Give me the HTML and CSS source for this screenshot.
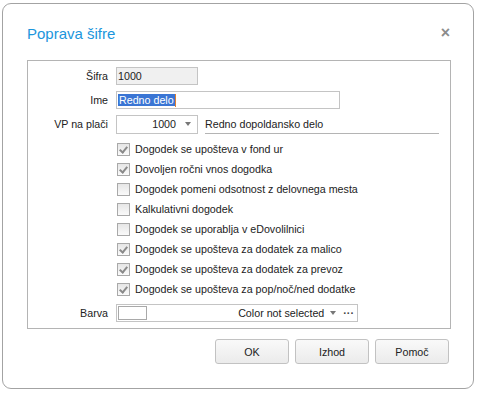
FILE: index.html
```html
<!DOCTYPE html>
<html>
<head>
<meta charset="utf-8">
<link rel="stylesheet" href="styles.css">
</head>
<body>
<div class="dialog">
  <div class="header">
    <span class="title">Poprava šifre</span>
    <span class="close">×</span>
  </div>
  <div class="panel">
    <div class="row">
      <label class="lbl">Šifra</label>
      <div class="field readonly short">1000</div>
    </div>
    <div class="row">
      <label class="lbl">Ime</label>
      <div class="field long"><span class="sel">Redno delo</span><span class="caret"></span></div>
    </div>
    <div class="row">
      <label class="lbl">VP na plači</label>
      <div class="combo short"><span class="num">1000</span><span class="arrow"></span></div>
      <div class="desc">Redno dopoldansko delo</div>
    </div>
    <div class="checks">
      <div class="chk"><span class="box on"></span>Dogodek se upošteva v fond ur</div>
      <div class="chk"><span class="box on"></span>Dovoljen ročni vnos dogodka</div>
      <div class="chk"><span class="box"></span>Dogodek pomeni odsotnost z delovnega mesta</div>
      <div class="chk"><span class="box"></span>Kalkulativni dogodek</div>
      <div class="chk"><span class="box"></span>Dogodek se uporablja v eDovolilnici</div>
      <div class="chk"><span class="box on"></span>Dogodek se upošteva za dodatek za malico</div>
      <div class="chk"><span class="box on"></span>Dogodek se upošteva za dodatek za prevoz</div>
      <div class="chk"><span class="box on"></span>Dogodek se upošteva za pop/noč/ned dodatke</div>
    </div>
    <div class="row barva">
      <label class="lbl">Barva</label>
      <div class="color">
        <span class="swatch"></span>
        <span class="ctext">Color not selected</span>
        <span class="arrow"></span>
        <span class="dots">···</span>
      </div>
    </div>
  </div>
  <div class="buttons">
    <button class="btn">OK</button>
    <button class="btn">Izhod</button>
    <button class="btn">Pomoč</button>
  </div>
</div>
</body>
</html>
```

FILE: styles.css
```css
* { box-sizing: border-box; }
html, body { margin: 0; padding: 0; background: #fff; }
body {
  font-family: "Liberation Sans", Arial, sans-serif;
  font-size: 10.7px;
  color: #222;
}
.dialog {
  margin: 3px 0 0 2px;
  width: 472px;
  height: 386px;
  border: 1px solid #a3a3a3;
  border-radius: 9px;
  padding: 0 24px;
}
.header {
  display: flex;
  justify-content: space-between;
  align-items: center;
  height: 56px;
  padding-top: 2px;
}
.title {
  color: #1b96dc;
  font-size: 15px;
}
.close {
  color: #8c8c8c;
  font-size: 16px;
  font-weight: bold;
  margin-right: -1px;
}
.panel {
  border: 1px solid #b4b4b4;
  width: 424px;
  height: 269px;
  padding-top: 6px;
}
.row {
  display: flex;
  align-items: center;
  height: 18px;
  margin-bottom: 6px;
}
.lbl {
  width: 80px;
  text-align: right;
  margin-right: 8px;
}
.field {
  height: 18px;
  border: 1px solid #c4c4c4;
  padding: 0 1px;
  display: flex;
  align-items: center;
}
.readonly { background: #f0f0f0; }
.short { width: 82px; }
.long { width: 224px; }
.sel { background: #3a75d4; color: #fff; padding: 0 1px; }
.caret { width: 1px; height: 13px; background: #e08030; }
.combo {
  height: 19px;
  border: 1px solid #c4c4c4;
  display: flex;
  align-items: center;
  justify-content: flex-end;
  padding-right: 6px;
}
.combo .num { margin-right: 9px; }
.arrow {
  width: 0; height: 0;
  border-left: 3.5px solid transparent;
  border-right: 3.5px solid transparent;
  border-top: 4px solid #777;
}
.desc {
  margin-left: 7px;
  width: 234px;
  border-bottom: 1px solid #b4b4b4;
  padding-top: 1px;
  height: 19px;
  line-height: 17px;
}
.checks {
  margin-left: 88px;
  margin-top: 5px;
}
.chk {
  display: flex;
  align-items: center;
  height: 20px;
}
.box {
  width: 13px;
  height: 13px;
  border: 1px solid #a9a9a9;
  background: linear-gradient(#e6e6e6, #fafafa);
  margin-left: 1px;
  margin-right: 5px;
  position: relative;
}
.box.on::after {
  content: "";
  position: absolute;
  left: 3px;
  top: 1px;
  width: 3px;
  height: 6px;
  border-right: 2px solid #8a8a8a;
  border-bottom: 2px solid #8a8a8a;
  transform: rotate(40deg);
}
.barva { margin-top: 5px; }
.color {
  width: 242px;
  height: 18px;
  border: 1px solid #c4c4c4;
  display: flex;
  align-items: center;
  padding: 0 3px 0 1px;
}
.swatch {
  width: 29px;
  height: 14px;
  border: 1px solid #a9a9a9;
}
.ctext { margin-left: auto; margin-right: 6px; }
.dots { margin-left: 7px; font-weight: bold; color: #444; }
.buttons {
  display: flex;
  justify-content: flex-end;
  gap: 6px;
  margin-top: 10px;
  margin-right: 0;
}
.btn {
  width: 74px;
  height: 25px;
  border: 1px solid #c2c2c2;
  border-radius: 3px;
  background: linear-gradient(#f9f9f9, #ebebeb);
  font-family: "Liberation Sans", Arial, sans-serif;
  font-size: 10.7px;
  font-weight: normal;
  color: #222;
  padding: 0;
}
```
